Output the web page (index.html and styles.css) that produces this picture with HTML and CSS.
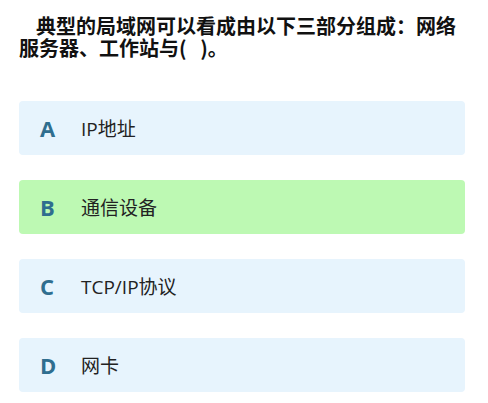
FILE: index.html
```html
<!DOCTYPE html>
<html lang="zh">
<head>
<meta charset="utf-8">
<link rel="stylesheet" href="styles.css">
</head>
<body>
<div class="quiz">
  <div class="question">典型的局域网可以看成由以下三部分组成：网络服务器、工作站与(&nbsp;&nbsp;&nbsp;)。</div>
  <div class="options">
    <div class="option"><span class="key">A</span><span class="label">IP地址</span></div>
    <div class="option selected"><span class="key">B</span><span class="label">通信设备</span></div>
    <div class="option"><span class="key">C</span><span class="label">TCP/IP协议</span></div>
    <div class="option"><span class="key">D</span><span class="label">网卡</span></div>
  </div>
</div>
</body>
</html>
```
FILE: styles.css
```css
html, body {
  margin: 0;
  padding: 0;
  background: #ffffff;
}
.quiz {
  padding: 15px 23px 0 19px;
  font-family: "Open Sans", "Noto Sans CJK SC", sans-serif;
}
.question {
  font-family: "Noto Sans CJK SC", sans-serif;
  font-weight: 700;
  font-size: 20px;
  line-height: 22px;
  color: #111;
  text-indent: 17px;
}
.options {
  margin-top: 42px;
  display: flex;
  flex-direction: column;
  gap: 25px;
}
.option {
  height: 54px;
  border-radius: 4px;
  background: #e7f4fd;
  display: flex;
  align-items: center;
  padding-left: 21px;
}
.option.selected {
  background: #bdf9b3;
}
.key {
  width: 41px;
  font-family: "Open Sans", sans-serif;
  font-weight: 700;
  font-size: 22px;
  color: #2f6e8f;
}
.label {
  font-family: "Open Sans", "Noto Sans CJK SC", sans-serif;
  font-size: 19px;
  color: #222;
}
```
